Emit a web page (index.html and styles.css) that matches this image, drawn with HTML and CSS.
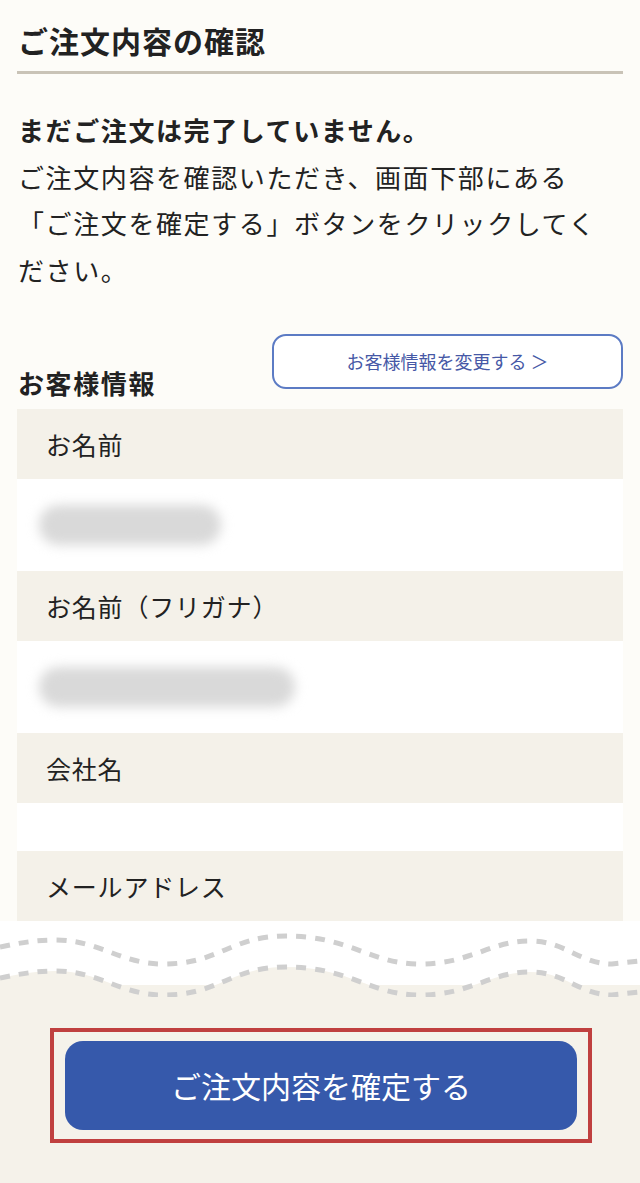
FILE: index.html
```html
<!DOCTYPE html>
<html lang="ja">
<head>
  <meta charset="UTF-8">
  <meta name="viewport" content="width=device-width, initial-scale=1">
  <title>ご注文内容の確認</title>
  <link rel="stylesheet" href="styles.css">
</head>
<body>

<div class="page">
  <h1 class="page-title">ご注文内容の確認</h1>

  <p class="lead">
    <strong>まだご注文は完了していません。</strong><br>
    ご注文内容を確認いただき、画面下部にある<br>
    「ご注文を確定する」ボタンをクリックしてください。
  </p>

  <div class="section-head">
    <h2>お客様情報</h2>
    <a class="edit-btn" href="#">お客様情報を変更する ＞</a>
  </div>

  <dl class="info">
    <dt>お名前</dt>
    <dd><span class="masked" style="width: 182px;"></span></dd>
    <dt>お名前（フリガナ）</dt>
    <dd><span class="masked" style="width: 256px;"></span></dd>
    <dt>会社名</dt>
    <dd class="empty"></dd>
    <dt>メールアドレス</dt>
  </dl>
</div>

<svg class="wave" width="640" height="76" viewBox="0 0 640 76">
  <rect x="0" y="0" width="640" height="64" fill="#ffffff"/>
  <rect x="0" y="64" width="640" height="12" fill="#f5f2ea"/>
  <path d="M0,57 C20,53 35,50 55,50 C100,50 120,74 163,74 C220,74 230,46 286,46 C350,46 370,74 420,74 C470,74 490,51 530,51 C565,51 580,74 612,74 L640,71 L640,76 L0,76 Z" fill="#f5f2ea"/>
  <path class="dash" d="M0,26 C20,22 35,19 55,19 C100,19 120,43 163,43 C220,43 230,15 286,15 C350,15 370,43 420,43 C470,43 490,20 530,20 C565,20 580,43 612,43 L640,40"/>
  <path class="dash" d="M0,57 C20,53 35,50 55,50 C100,50 120,74 163,74 C220,74 230,46 286,46 C350,46 370,74 420,74 C470,74 490,51 530,51 C565,51 580,74 612,74 L640,71"/>
</svg>

<div class="footer">
  <div class="confirm-frame">
    <button class="confirm-btn">ご注文内容を確定する</button>
  </div>
</div>

</body>
</html>
```

FILE: styles.css
```css
body {
  font-family: "Noto Sans CJK JP", "Noto Sans", sans-serif;
  background: #fdfcf8;
  color: #222;
  margin: 0;
}
.page {
  padding: 20px 17px 0;
}
.page-title {
  font-size: 30px;
  font-weight: bold;
  letter-spacing: 1px;
  line-height: 40px;
  margin: 0;
  padding: 0 1px 11px;
  border-bottom: 3px solid #c9c3b7;
}
.lead {
  font-size: 26px;
  line-height: 46.7px;
  letter-spacing: 1.6px;
  margin: 33px 0 0;
  padding-left: 1px;
}
.lead strong {
  font-weight: bold;
}
.section-head {
  display: flex;
  justify-content: space-between;
  align-items: flex-end;
  margin-top: 40px;
}
.section-head h2 {
  font-size: 26px;
  font-weight: bold;
  letter-spacing: 1.6px;
  line-height: 40px;
  margin: 0 0 6px 1px;
}
.edit-btn {
  display: flex;
  align-items: center;
  justify-content: center;
  box-sizing: border-box;
  width: 351px;
  height: 55px;
  margin-bottom: 20px;
  border: 2px solid #5c7bc4;
  border-radius: 14px;
  background: #fff;
  color: #4658a6;
  font-size: 18px;
  text-decoration: none;
}
.info {
  margin: 0;
}
.info dt {
  background: #f4f1e9;
  height: 70px;
  display: flex;
  align-items: center;
  padding-left: 29px;
  font-size: 25px;
  letter-spacing: 0.8px;
}
.info dd {
  margin: 0;
  background: #fff;
  height: 92px;
  display: flex;
  align-items: center;
  padding-left: 22px;
}
.info dd.empty {
  height: 48px;
}
.masked {
  display: block;
  height: 40px;
  border-radius: 20px;
  background: #d9d9d9;
  filter: blur(6px);
}
.wave {
  display: block;
}
.dash {
  fill: none;
  stroke: #cfcfcf;
  stroke-width: 5;
  stroke-dasharray: 10 9;
}
.footer {
  background: #f5f2ea;
  padding: 31px 0 53px;
}
.confirm-frame {
  width: 542px;
  box-sizing: border-box;
  margin: 0 0 0 50px;
  border: 4px solid #c0403f;
  padding: 9px 11px;
}
.confirm-btn {
  display: block;
  width: 100%;
  height: 89px;
  border: none;
  border-radius: 18px;
  background: #3659ab;
  color: #fff;
  font-family: inherit;
  font-size: 30px;
  cursor: pointer;
}
```
